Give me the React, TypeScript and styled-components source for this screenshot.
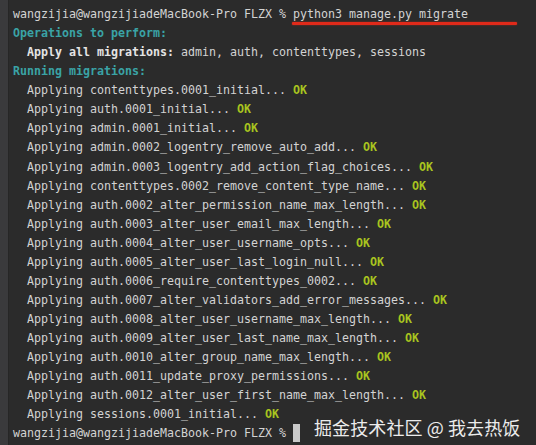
import React from "react";
import styled, { createGlobalStyle } from "styled-components";

const Global = createGlobalStyle`
  html, body { margin: 0; padding: 0; background: #2b2b2b; }
  body { width: 536px; height: 445px; overflow: hidden; }
`;

const Window = styled.div`
  width: 536px;
  height: 445px;
  display: flex;
  background: #2b2b2b;
  position: relative;
  overflow: hidden;
`;

const Gutter = styled.div`
  width: 8px;
  flex: none;
  background: #3a3a3c;
  border-right: 1px solid #262626;
`;

const Screen = styled.div`
  flex: 1;
  padding: 5px 0 0 4px;
  font-family: "DejaVu Sans Mono", "Liberation Mono", monospace;
  font-size: 11.63px;
  line-height: 19.07px;
  color: #d3d3d3;
  white-space: pre;
`;

const Line = styled.div<{ $indent?: boolean }>`
  height: 19.07px;
  padding-left: ${(p) => (p.$indent ? "14px" : "0")};
`;

const Cmd = styled.span`
  position: relative;
`;

const Underline = styled.span`
  position: absolute;
  left: -1px;
  right: -49px;
  top: 15px;
  height: 2.5px;
  background: #e02a1a;
  border-radius: 1px;
  box-shadow: 0 0 2px rgba(224, 42, 26, 0.6);
`;

const Heading = styled.span`
  color: #3aa3a6;
  font-weight: bold;
`;

const Strong = styled.span`
  color: #e4e4e4;
  font-weight: bold;
`;

const Ok = styled.span`
  color: #a9c41f;
  font-weight: bold;
`;

const Cursor = styled.span`
  display: inline-block;
  width: 7px;
  height: 18px;
  background: #c9c9c9;
  vertical-align: -5px;
`;

const Watermark = styled.div`
  position: absolute;
  left: 314px;
  top: 414px;
  font-family: "Noto Sans CJK SC", "Noto Sans", sans-serif;
  font-size: 18px;
  line-height: 26px;
  color: #ececec;
  letter-spacing: 0.1px;
`;

const PROMPT = "wangzijia@wangzijiadeMacBook-Pro FLZX % ";

const migrations = [
  "contenttypes.0001_initial",
  "auth.0001_initial",
  "admin.0001_initial",
  "admin.0002_logentry_remove_auto_add",
  "admin.0003_logentry_add_action_flag_choices",
  "contenttypes.0002_remove_content_type_name",
  "auth.0002_alter_permission_name_max_length",
  "auth.0003_alter_user_email_max_length",
  "auth.0004_alter_user_username_opts",
  "auth.0005_alter_user_last_login_null",
  "auth.0006_require_contenttypes_0002",
  "auth.0007_alter_validators_add_error_messages",
  "auth.0008_alter_user_username_max_length",
  "auth.0009_alter_user_last_name_max_length",
  "auth.0010_alter_group_name_max_length",
  "auth.0011_update_proxy_permissions",
  "auth.0012_alter_user_first_name_max_length",
  "sessions.0001_initial",
];

export default function App() {
  return (
    <>
      <Global />
      <Window>
        <Gutter />
        <Screen>
          <Line>
            {PROMPT}
            <Cmd>
              python3 manage.py migrate
              <Underline />
            </Cmd>
          </Line>
          <Line>
            <Heading>Operations to perform:</Heading>
          </Line>
          <Line $indent>
            <Strong>Apply all migrations:</Strong> admin, auth, contenttypes, sessions
          </Line>
          <Line>
            <Heading>Running migrations:</Heading>
          </Line>
          {migrations.map((m) => (
            <Line $indent key={m}>
              Applying {m}... <Ok>OK</Ok>
            </Line>
          ))}
          <Line>
            {PROMPT}
            <Cursor />
          </Line>
        </Screen>
        <Watermark>掘金技术社区 @ 我去热饭</Watermark>
      </Window>
    </>
  );
}
